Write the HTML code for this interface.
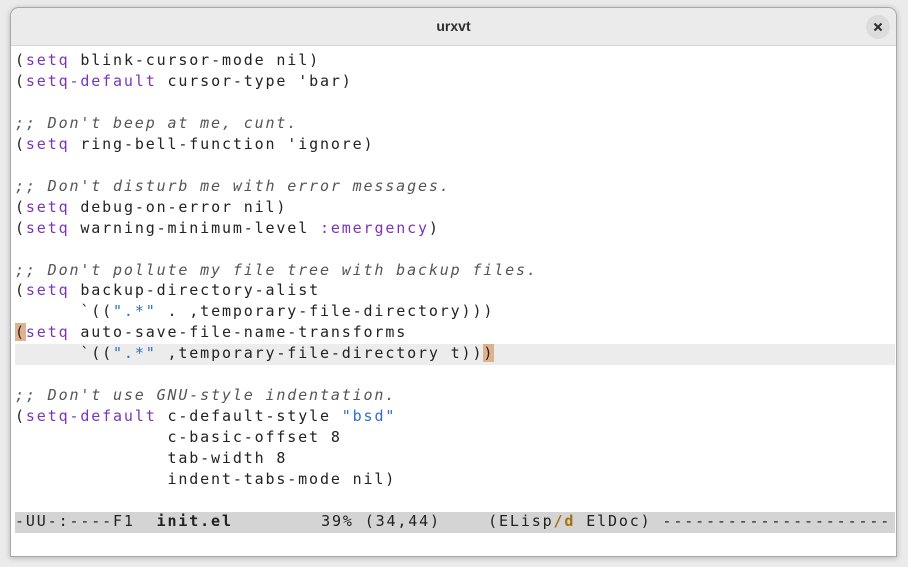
<!DOCTYPE html>
<html><head><meta charset="utf-8"><style>
body{margin:0;width:908px;height:567px;background:#ebebeb;overflow:hidden;position:relative}
.win{position:absolute;left:10px;top:7px;width:887px;height:550px;background:#fff;border:1px solid #a8a8a8;border-radius:9px 9px 0 0;box-shadow:0 1px 6px rgba(0,0,0,.25);overflow:hidden;box-sizing:border-box}
.tb{position:absolute;left:0;top:0;width:100%;height:37px;background:#ebebeb;border-bottom:1px solid #d6d6d6;font:bold 14px "Liberation Sans",sans-serif;color:#2e2e2e;text-align:center;line-height:37px}
.x{position:absolute;right:6px;top:7px;width:24px;height:24px;border-radius:50%;background:#dcdcdc}
pre{position:absolute;left:4px;top:42px;margin:0;font:15px "DejaVu Sans Mono",monospace;letter-spacing:1.86px;line-height:20.95px;color:#222}
.k{color:#7b34b8}.s{color:#2f6fc4}.c{color:#555;font-style:italic}
.hl{position:absolute;left:4px;width:880px;top:336px;height:21px;background:#ececec}
.ml{position:absolute;left:4px;width:880px;top:504px;height:21px;background:#d4d4d4}
.p{background:#dcb38e}
b{font-weight:bold}.d{color:#a66f12;font-weight:bold}
.sp{letter-spacing:3px}.sp2{letter-spacing:5.5px}
</style></head><body>
<div class="win">
<div class="tb">urxvt<div class="x"><svg width="24" height="24"><path d="M8.5 8.5L15.5 15.5M15.5 8.5L8.5 15.5" stroke="#2e2e2e" stroke-width="2"/></svg></div></div>
<div class="hl"></div><div class="ml"></div>
<pre>(<span class="k">setq</span> blink-cursor-mode nil)
(<span class="k">setq-default</span> cursor-type 'bar)

<span class="c">;; Don't beep at me, cunt.</span>
(<span class="k">setq</span> ring-bell-function 'ignore)

<span class="c">;; Don't disturb me with error messages.</span>
(<span class="k">setq</span> debug-on-error nil)
(<span class="k">setq</span> warning-minimum-level <span class="k">:emergency</span>)

<span class="c">;; Don't pollute my file tree with backup files.</span>
(<span class="k">setq</span> backup-directory-alist
      `((<span class="s">".*"</span> . ,temporary-file-directory)))
<span class="p">(</span><span class="k">setq</span> auto-save-file-name-transforms
      `((<span class="s">".*"</span> ,temporary-file-directory t))<span class="p">)</span>

<span class="c">;; Don't use GNU-style indentation.</span>
(<span class="k">setq-default</span> c-default-style <span class="s">"bsd"</span>
              c-basic-offset 8
              tab-width 8
              indent-tabs-mode nil)

-UU-:----F1  <b>init.el</b>       <span class="sp"> </span>39% (34,44)   <span class="sp2"> </span>(ELisp<span class="d">/d</span> ElDoc) ---------------------</pre>
</div>
</body></html>
